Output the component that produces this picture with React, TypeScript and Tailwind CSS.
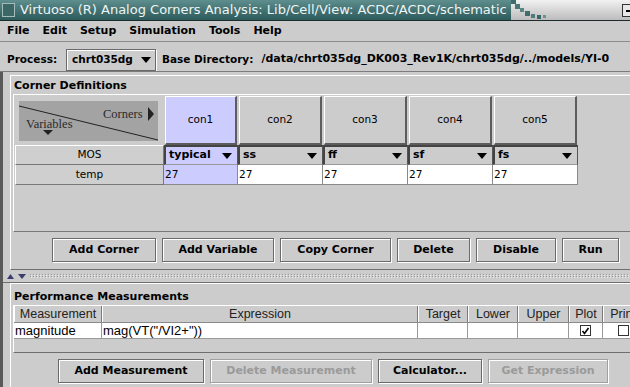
import React from "react";

type BtnProps = { label: string; className: string; disabled?: boolean };

function Btn({ label, className, disabled }: BtnProps) {
  return (
    <div
      className={`h-[24px] shrink-0 flex items-center justify-center whitespace-nowrap border text-[11px] font-bold shadow-[1px_1px_0_#fff,inset_1px_1px_0_#fff] ${
        disabled ? "border-[#a0a0a0] text-[#9a9a9a]" : "border-[#6a6a6a] text-black"
      } ${className}`}
    >
      {label}
    </div>
  );
}

function DownTri({ color = "#000" }: { color?: string }) {
  return (
    <svg width="10" height="6" viewBox="0 0 10 6">
      <polygon points="0,0 10,0 5,6" fill={color} />
    </svg>
  );
}

const corners = [
  { name: "con1", model: "typical", w: "w-[74px]", active: true },
  { name: "con2", model: "ss", w: "w-[85px]", active: false },
  { name: "con3", model: "ff", w: "w-[85px]", active: false },
  { name: "con4", model: "sf", w: "w-[85px]", active: false },
  { name: "con5", model: "fs", w: "w-[85px]", active: false },
];

const measureCols = [
  { label: "Measurement", w: "w-[88px]" },
  { label: "Expression", w: "w-[316px]" },
  { label: "Target", w: "w-[50px]" },
  { label: "Lower", w: "w-[50px]" },
  { label: "Upper", w: "w-[51px]" },
  { label: "Plot", w: "w-[34px]" },
  { label: "Print", w: "w-[40px]" },
];

export default function App() {
  return (
    <div className="w-[630px] h-[387px] overflow-hidden bg-[#cccccc] flex flex-col font-['DejaVu_Sans',sans-serif] text-black">
      {/* title bar */}
      <div className="h-[21px] shrink-0 flex items-stretch border-b border-b-[#1c2c2c] bg-gradient-to-b from-[#5e8e8e] to-[#2d5a5a]">
        <div className="flex items-center">
          <div className="ml-[2px] w-[13px] h-[14px] border border-[#a4bcbc] bg-[#3b6767]" />
          <span className="ml-[5px] text-[13px] text-[#eef5f5] whitespace-nowrap">
            Virtuoso (R) Analog Corners Analysis: Lib/Cell/View: ACDC/ACDC/schematic
          </span>
        </div>
        <div className="relative flex-1 ml-[4px] bg-gradient-to-b from-[#f2f2f2] to-[#bcbcbc]">
          <svg className="absolute left-0 top-0" width="44" height="20" viewBox="0 0 44 20">
            <rect x="0" y="0" width="5" height="4" fill="#3f6d6d" />
            <rect x="4" y="4" width="5" height="5" fill="#4a7878" />
            <rect x="9" y="8" width="4" height="4" fill="#5a8686" />
            <rect x="14" y="11" width="5" height="5" fill="#3f6d6d" />
            <rect x="20" y="14" width="4" height="4" fill="#4f7c7c" />
            <rect x="26" y="15" width="4" height="4" fill="#3a6868" />
            <rect x="32" y="15" width="3" height="3" fill="#6a9292" />
          </svg>
          <div className="absolute right-[-6px] top-[4px] w-[14px] h-[13px] border border-[#333] bg-[#e8e8e8] flex items-center pl-[3px]">
            <div className="w-[6px] h-[2px] bg-black" />
          </div>
        </div>
      </div>

      {/* menu bar */}
      <div className="h-[21px] shrink-0 flex items-center gap-[13px] pl-[7px] text-[11px] font-bold border-b border-b-[#8c8c8c]">
        <span>File</span>
        <span>Edit</span>
        <span>Setup</span>
        <span>Simulation</span>
        <span>Tools</span>
        <span>Help</span>
      </div>

      {/* process row */}
      <div className="h-[30px] shrink-0 flex items-center pt-[6px] text-[10.5px] font-bold whitespace-nowrap overflow-hidden border-b border-b-[#7c7c7c]">
        <span className="pl-[7px] w-[59px] shrink-0">Process:</span>
        <div className="ml-[7px] w-[90px] h-[22px] shrink-0 flex items-center justify-between pl-[5px] pr-[4px] border border-[#6a6a6a] shadow-[1px_1px_0_#fff,inset_1px_1px_0_#fff]">
          <span>chrt035dg</span>
          <DownTri />
        </div>
        <span className="ml-[6px] shrink-0">Base Directory:</span>
        <span className="ml-[8px] text-[11px]">/data/chrt035dg_DK003_Rev1K/chrt035dg/../models/YI-0</span>
      </div>

      {/* body */}
      <div className="flex-1 flex flex-col min-h-0 border-l-[3px] border-l-[#5a5a5a]">
        {/* corner definitions */}
        <div className="ml-[7px] mt-[3px] h-[195px] shrink-0 flex flex-col border-t border-l border-t-white border-l-white border-b border-b-[#6e6e6e]">
          <div className="h-[18px] shrink-0 pl-[3px] pt-[2px] flex items-center text-[11px] font-bold">Corner Definitions</div>
          <div className="ml-[2px] h-[138px] shrink-0 pl-[1px] pt-[1px] border-t border-l border-t-white border-l-white border-b border-b-[#777]">
            {/* header row */}
            <div className="flex h-[49px]">
              <div className="w-[149px] shrink-0 pl-[4px] pt-[5px]">
                <div className="relative w-[139px] h-[40px] bg-[#a3a3a3] font-['Liberation_Serif',serif] text-[12.5px] text-[#2a2a2a]">
                  <svg className="absolute left-0 top-0" width="139" height="40" viewBox="0 0 139 40">
                    <line x1="0" y1="5" x2="139" y2="39" stroke="#222" strokeWidth="1" />
                    <polygon points="129,6 135,13 129,20" fill="#222" />
                    <polygon points="24,29 34,29 29,34" fill="#222" />
                  </svg>
                  <span className="absolute left-[84px] top-[4px]">Corners</span>
                  <span className="absolute left-[7px] top-[14px]">Variables</span>
                </div>
              </div>
              {corners.map((c) => (
                <div key={c.name} className={`${c.w} shrink-0 pl-[1px] pr-[1px]`}>
                  <div
                    className={`h-[49px] flex items-center justify-center text-[10.5px] border-t border-l border-t-white border-l-white border-r-2 border-b-2 border-r-[#5c5c5c] border-b-[#5c5c5c] ${
                      c.active ? "bg-[#ccccff]" : "bg-[#cccccc]"
                    }`}
                  >
                    {c.name}
                  </div>
                </div>
              ))}
            </div>
            {/* MOS row */}
            <div className="flex h-[20px]">
              <div className="w-[149px] shrink-0 flex items-center justify-center text-[10.5px] border-t border-l border-t-white border-l-white border-b border-r border-b-[#777] border-r-[#777] bg-[#cfcfcf]">
                MOS
              </div>
              {corners.map((c) => (
                <div
                  key={c.name}
                  className={`${c.w} shrink-0 flex items-center justify-between pl-[3px] pr-[5px] text-[11px] font-bold border-t-2 border-l-2 border-r border-b border-t-[#444] border-l-[#444] border-r-[#555] border-b-[#999] ${
                    c.active ? "bg-[#ccccff]" : "bg-[#cccccc]"
                  }`}
                >
                  <span>{c.model}</span>
                  <DownTri />
                </div>
              ))}
            </div>
            {/* temp row */}
            <div className="flex h-[20px]">
              <div className="w-[149px] shrink-0 flex items-center justify-center text-[10.5px] border-l border-l-white border-b border-r border-b-[#777] border-r-[#777] bg-[#cfcfcf]">
                temp
              </div>
              {corners.map((c) => (
                <div
                  key={c.name}
                  className={`${c.w} shrink-0 flex items-center pl-[1px] text-[10.5px] border-r border-b border-r-[#8a8a8a] border-b-[#8a8a8a] ${
                    c.active ? "bg-[#ccccff]" : "bg-white"
                  }`}
                >
                  27
                </div>
              ))}
            </div>
          </div>
          <div className="flex-1 flex items-start pt-[6px] pl-[41px] gap-[6px]">
            <Btn label="Add Corner" className="w-[104px]" />
            <Btn label="Add Variable" className="w-[112px]" />
            <Btn label="Copy Corner" className="w-[111px]" />
            <Btn label="Delete" className="w-[73px]" />
            <Btn label="Disable" className="w-[80px]" />
            <Btn label="Run" className="w-[57px]" />
          </div>
        </div>

        {/* splitter */}
        <div className="h-[13px] shrink-0 flex items-center gap-[4px] pl-[4px] border-b border-b-[#6e6e6e]">
          <svg width="7" height="5" viewBox="0 0 7 5">
            <polygon points="0,5 7,5 3.5,0" fill="#3c3c6e" />
          </svg>
          <svg width="8" height="5" viewBox="0 0 8 5">
            <polygon points="0,0 8,0 4,5" fill="#3c3c6e" />
          </svg>
          <div className="flex-1 h-[4px] flex flex-col">
            <div className="h-[1px] bg-[repeating-linear-gradient(90deg,#9a9a9a_0_1px,transparent_1px_3px)]" />
            <div className="h-[1px] bg-[repeating-linear-gradient(90deg,transparent_0_1px,#eeeeee_1px_2px,transparent_2px_3px)]" />
            <div className="h-[1px] bg-[repeating-linear-gradient(90deg,#9a9a9a_0_1px,transparent_1px_3px)]" />
            <div className="h-[1px] bg-[repeating-linear-gradient(90deg,transparent_0_1px,#eeeeee_1px_2px,transparent_2px_3px)]" />
          </div>
        </div>

        {/* performance measurements */}
        <div className="flex-1 ml-[7px] flex flex-col border-t border-l border-t-white border-l-white">
          <div className="h-[21px] shrink-0 pl-[3px] pt-[5px] flex items-center text-[11px] font-bold">Performance Measurements</div>
          <div className="ml-[2px] h-[48px] shrink-0 flex flex-col border-t border-l border-t-white border-l-white border-b border-b-[#6e6e6e] font-['Liberation_Sans',sans-serif] overflow-hidden">
            <div className="flex h-[17px] shrink-0 border-b border-b-[#8a8a8a]">
              {measureCols.map((col) => (
                <div
                  key={col.label}
                  className={`${col.w} shrink-0 flex items-center justify-center text-[12.5px] text-[#222] border-l border-l-white border-r border-r-[#7a7a7a] whitespace-nowrap`}
                >
                  {col.label}
                </div>
              ))}
            </div>
            <div className="flex h-[16px] shrink-0 bg-white border-b border-b-[#9a9a9a] text-[13px]">
              <div className="w-[88px] shrink-0 pl-[1px] flex items-center border-r border-r-[#9a9a9a]">magnitude</div>
              <div className="w-[316px] shrink-0 pl-[1px] flex items-center border-r border-r-[#9a9a9a]">mag(VT("/VI2+"))</div>
              <div className="w-[50px] shrink-0 border-r border-r-[#9a9a9a]" />
              <div className="w-[50px] shrink-0 border-r border-r-[#9a9a9a]" />
              <div className="w-[51px] shrink-0 border-r border-r-[#9a9a9a]" />
              <div className="w-[34px] shrink-0 flex items-center justify-center border-r border-r-[#9a9a9a]">
                <div className="w-[11px] h-[11px] border border-[#333] bg-white flex items-center justify-center">
                  <svg width="9" height="9" viewBox="0 0 9 9">
                    <path d="M1.5 5 L3.5 7.5 L7.5 2" stroke="#000" strokeWidth="1.6" fill="none" />
                  </svg>
                </div>
              </div>
              <div className="w-[40px] shrink-0 flex items-center justify-center">
                <div className="w-[11px] h-[11px] border border-[#333] bg-white" />
              </div>
            </div>
          </div>
          <div className="flex-1 flex items-start pt-[6px] pl-[47px] gap-[6px]">
            <Btn label="Add Measurement" className="w-[146px]" />
            <Btn label="Delete Measurement" className="w-[162px]" disabled />
            <Btn label="Calculator..." className="w-[104px]" />
            <Btn label="Get Expression" className="w-[120px]" disabled />
          </div>
        </div>
      </div>
    </div>
  );
}
